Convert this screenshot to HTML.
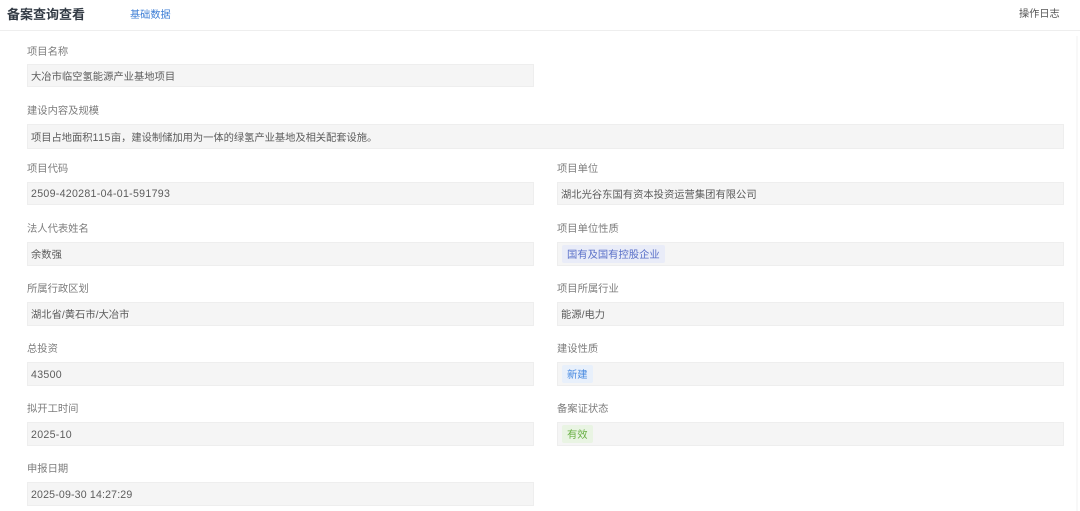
<!DOCTYPE html>
<html lang="zh">
<head>
<meta charset="utf-8">
<style>
html,body{margin:0;padding:0;background:#fff;width:1080px;height:511px;overflow:hidden}
body{position:relative;font-family:"Liberation Sans","Noto Sans CJK SC",sans-serif;color:#555}
.a{position:absolute;white-space:nowrap}
.title{left:7px;top:6px;font-size:13px;line-height:18px;font-weight:700;color:#333b45}
.tab{left:130px;top:8px;font-size:10.2px;line-height:16px;color:#3f7fd6}
.log{left:1019px;top:7px;font-size:10.2px;line-height:16px;color:#555}
.hr{left:0;top:30px;width:1080px;height:1px;background:#eeeeee}
.sb{left:1076px;top:36px;width:2px;height:475px;background:#f8f8f8}
.l{font-size:10.3px;line-height:14px;color:#7d7d7d}
.b{box-sizing:border-box;background:#f5f5f5;border:1px solid #eeeeee;font-size:10.3px;color:#5c5c5c;padding-left:3px;display:flex;align-items:center}
.L{left:27px;width:507px}
.R{left:557px;width:507px}
.u{padding-bottom:1px}
.n{font-size:10.6px;letter-spacing:.3px;padding-top:1px}
.t{display:inline-block;padding:0 5px;margin-left:1px;height:18px;line-height:21px;border-radius:2px;font-size:10.3px}
.t1{background:#e9ecf8;color:#5a70c8}
.t2{background:#e8f0fb;color:#4a8be0}
.t3{background:#e9f4e3;color:#69b045}
.d{font-size:10.6px;letter-spacing:.5px}
</style>
</head>
<body>
<div class="a title">备案查询查看</div>
<div class="a tab">基础数据</div>
<div class="a log">操作日志</div>
<div class="a hr"></div>
<div class="a sb"></div>

<div class="a l" style="left:27px;top:44px;margin-top:2px">项目名称</div>
<div class="a b L" style="top:64px;height:23px">大冶市临空氢能源产业基地项目</div>

<div class="a l" style="left:27px;top:105px">建设内容及规模</div>
<div class="a b" style="left:27px;width:1037px;top:124px;height:25px;letter-spacing:-.05px"><span>项目占地面积<span class="d">115</span>亩，建设制储加用为一体的绿氢产业基地及相关配套设施。</span></div>

<div class="a l" style="left:27px;top:163px">项目代码</div>
<div class="a b L n" style="top:182px;height:23px">2509-420281-04-01-591793</div>
<div class="a l" style="left:557px;top:163px">项目单位</div>
<div class="a b R" style="top:182px;height:23px">湖北光谷东国有资本投资运营集团有限公司</div>

<div class="a l" style="left:27px;top:223px">法人代表姓名</div>
<div class="a b L u" style="top:242px;height:24px">余数强</div>
<div class="a l" style="left:557px;top:223px">项目单位性质</div>
<div class="a b R" style="top:242px;height:24px"><span class="t t1">国有及国有控股企业</span></div>

<div class="a l" style="left:27px;top:283px">所属行政区划</div>
<div class="a b L u" style="top:302px;height:24px">湖北省/黄石市/大冶市</div>
<div class="a l" style="left:557px;top:283px">项目所属行业</div>
<div class="a b R u" style="top:302px;height:24px">能源/电力</div>

<div class="a l" style="left:27px;top:343px">总投资</div>
<div class="a b L n" style="top:362px;height:24px">43500</div>
<div class="a l" style="left:557px;top:343px">建设性质</div>
<div class="a b R" style="top:362px;height:24px"><span class="t t2">新建</span></div>

<div class="a l" style="left:27px;top:403px">拟开工时间</div>
<div class="a b L n" style="top:422px;height:24px">2025-10</div>
<div class="a l" style="left:557px;top:403px">备案证状态</div>
<div class="a b R" style="top:422px;height:24px"><span class="t t3">有效</span></div>

<div class="a l" style="left:27px;top:463px">申报日期</div>
<div class="a b L n" style="top:482px;height:24px;letter-spacing:.16px">2025-09-30 14:27:29</div>
</body>
</html>
